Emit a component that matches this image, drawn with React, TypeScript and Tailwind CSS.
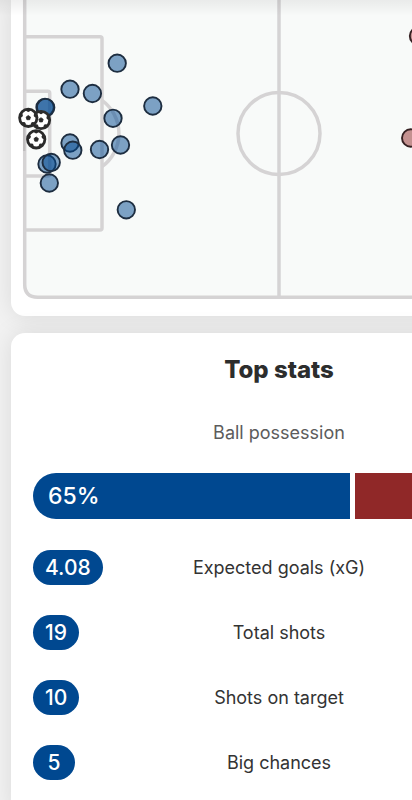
type Dot = { x: number; y: number };

const homeShots: Dot[] = [
  { x: 117.2, y: 63.2 },
  { x: 70, y: 89.2 },
  { x: 92.4, y: 93.5 },
  { x: 45, y: 107.3 },
  { x: 45.7, y: 107.6 },
  { x: 152.8, y: 106 },
  { x: 113, y: 118.3 },
  { x: 70, y: 143 },
  { x: 72.8, y: 150.2 },
  { x: 99.5, y: 149.5 },
  { x: 120.5, y: 145 },
  { x: 47, y: 164 },
  { x: 51.2, y: 162.5 },
  { x: 49.3, y: 183 },
  { x: 126.3, y: 209.8 },
];

const awayShots: Dot[] = [
  { x: 418.5, y: 36 },
  { x: 410.7, y: 138 },
];

const goals: Dot[] = [
  { x: 41, y: 120 },
  { x: 28.3, y: 117.8 },
  { x: 36.2, y: 139.3 },
];

const stats = [
  { label: 'Expected goals (xG)', home: '4.08' },
  { label: 'Total shots', home: '19' },
  { label: 'Shots on target', home: '10' },
  { label: 'Big chances', home: '5' },
];

const possession = { home: 65, away: 35 };

const GoalBall = ({ x, y }: Dot) => (
  <g transform={`translate(${x} ${y})`}>
    <circle r="8.7" fill="#fff" stroke="#2b2b2b" strokeWidth="2.8" />
    <path
      d="M0 -2.3 L2.2 -0.7 L1.4 1.9 L-1.4 1.9 L-2.2 -0.7 Z"
      fill="#2b2b2b"
      stroke="#2b2b2b"
      strokeWidth="0.8"
      strokeLinejoin="round"
    />
    {[0, 72, 144, 216, 288].map((angle) => (
      <path key={angle} d="M-3 -8 L3 -8 L1.2 -6.2 Q0 -5.3 -1.2 -6.2 Z" fill="#2b2b2b" transform={`rotate(${angle})`} />
    ))}
  </g>
);

const ShotMap = () => (
  <section className="bg-white rounded-b-[14px] px-3 pb-[17px] shadow-[0_0_24px_rgba(0,0,0,0.1)]">
    <svg viewBox="23 0 512 299" className="block w-full h-auto overflow-visible" role="img" aria-label="Shot map">
      {/* Pitch markings */}
      <g fill="none" stroke="#d5d3d4" strokeWidth="3.5">
        <path d="M24.7 0 V284.3 Q24.7 297.3 37.7 297.3 H520.3 Q533.3 297.3 533.3 284.3 V0" fill="#f8faf9" />
        <path d="M279 0 V297" />
        <circle cx="279" cy="133.5" r="41" />
        <path d="M24.7 36.7 H100 Q102 36.7 102 38.7 V228 Q102 230 100 230 H24.7" />
        <path d="M24.7 91.3 H47.7 Q49.7 91.3 49.7 93.3 V174 Q49.7 176 47.7 176 H24.7" />
        <path d="M102 100.3 A41 41 0 0 1 102 166.7" />
      </g>
      <path d="M24.2 117 V151" stroke="#bfbdbe" strokeWidth="2.4" />

      {/* Shots */}
      <g fill="#004890" fillOpacity="0.5" stroke="#1d2d40" strokeWidth="1.9">
        {homeShots.map((shot, i) => (
          <circle key={i} cx={shot.x} cy={shot.y} r="8.7" />
        ))}
      </g>
      <g fill="#902828" fillOpacity="0.5" stroke="#352022" strokeWidth="1.9">
        {awayShots.map((shot, i) => (
          <circle key={i} cx={shot.x} cy={shot.y} r="8.7" />
        ))}
      </g>
      {goals.map((goal, i) => (
        <GoalBall key={i} {...goal} />
      ))}
    </svg>
  </section>
);

const TopStats = () => (
  <section className="bg-white rounded-t-[14px] px-[22px] pt-[21px] pb-8 shadow-[0_0_24px_rgba(0,0,0,0.1)]">
    <h2 className="text-2xl font-extrabold text-center text-[#2c2d2d]">Top stats</h2>

    <p className="mt-[33px] text-lg text-center text-[#5c5c5c]">Ball possession</p>
    <div
      className="mt-[26px] grid gap-[5px] h-[46px] rounded-full overflow-hidden"
      style={{ gridTemplateColumns: `${possession.home}fr ${possession.away}fr` }}
    >
      <div className="flex items-center pl-[15px] bg-[#004890] text-white text-[23px] font-medium">
        {possession.home}%
      </div>
      <div className="bg-[#902828]"></div>
    </div>

    <ul className="mt-[31px] flex flex-col gap-[30px]">
      {stats.map((stat) => (
        <li key={stat.label} className="grid grid-cols-[1fr_auto_1fr] items-center">
          <span className="justify-self-start min-w-[42px] h-[35px] px-3 flex items-center justify-center rounded-full bg-[#004890] text-white text-[21px] font-medium">
            {stat.home}
          </span>
          <span className="text-lg text-[#333333]">{stat.label}</span>
        </li>
      ))}
    </ul>
  </section>
);

const App = () => {
  return (
    <main className="relative min-h-screen overflow-hidden bg-[#f2f2f2] font-['Inter',sans-serif]">
      {/* Cards run past the right edge of narrow screens */}
      <div className="ml-[11px] -mr-[135px] flex flex-col gap-[17px]">
        <ShotMap />
        <TopStats />
      </div>
      {/* Shadow of the header above the scroll area */}
      <div className="absolute inset-x-0 top-0 h-4 bg-linear-to-b from-black/6 to-transparent pointer-events-none"></div>
    </main>
  );
};

export default App;
